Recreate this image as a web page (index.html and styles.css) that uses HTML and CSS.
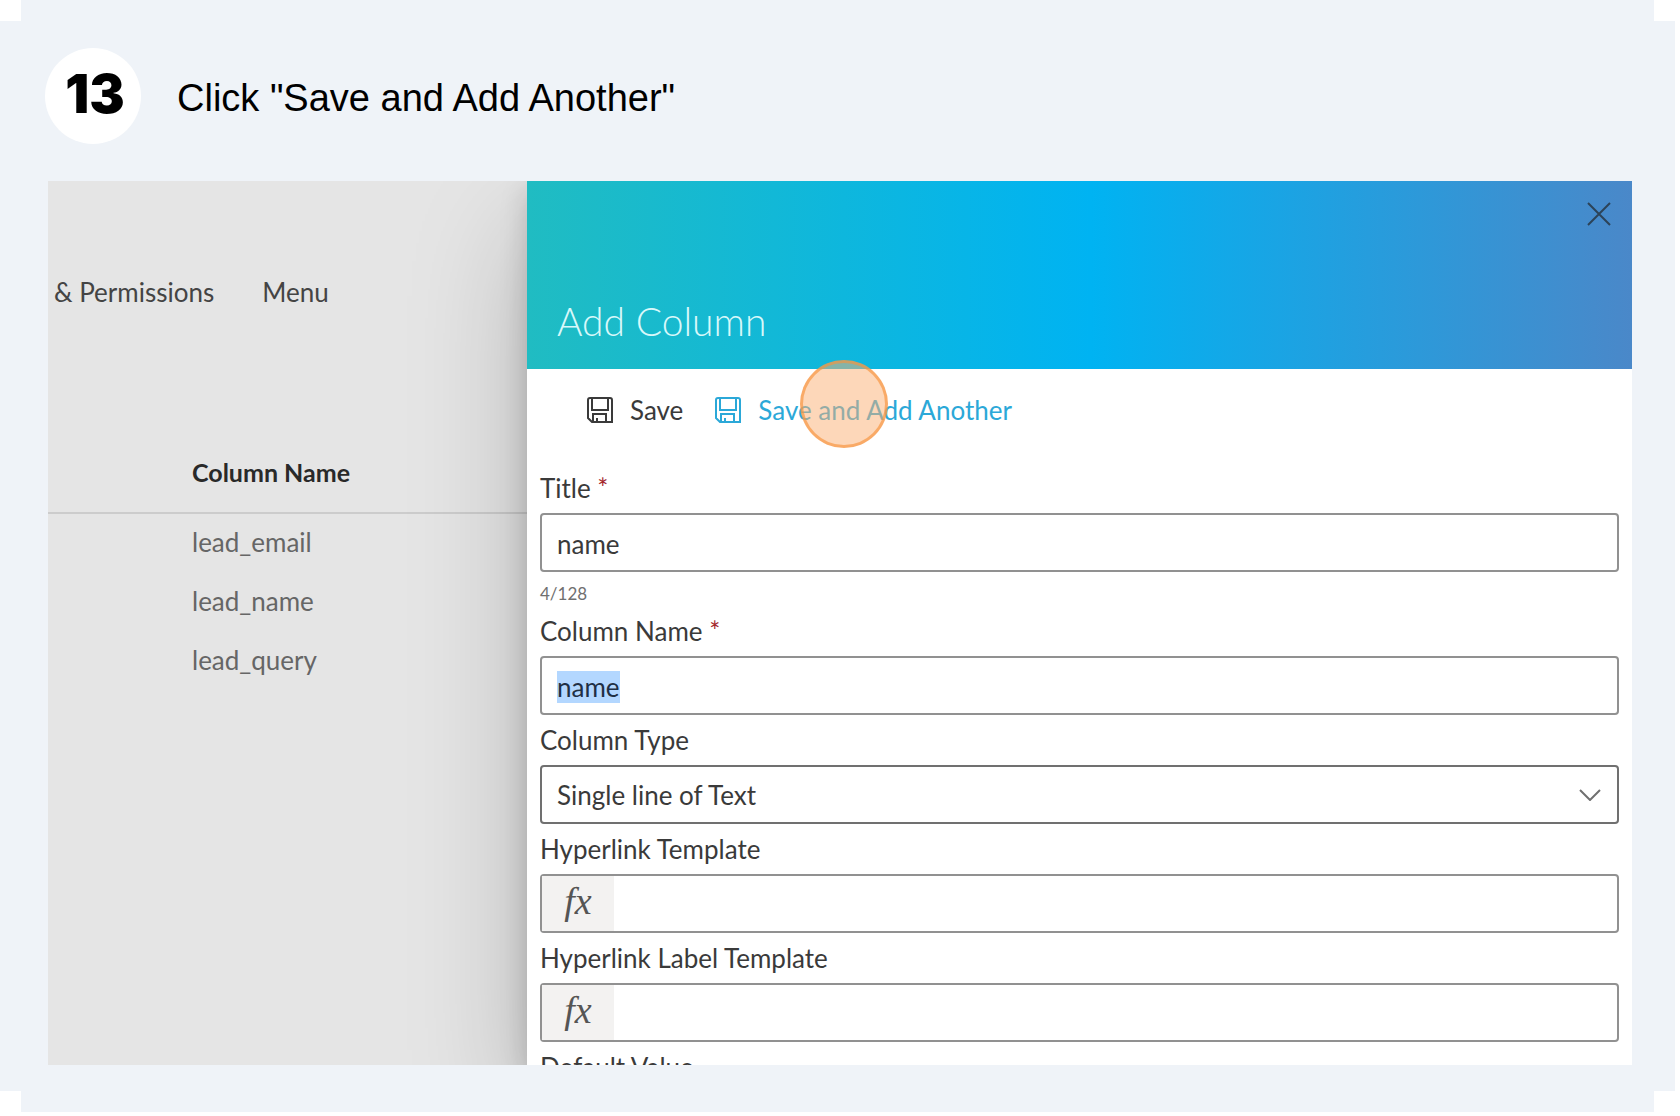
FILE: index.html
```html
<!DOCTYPE html>
<html lang="en">
<head>
<meta charset="utf-8">
<meta name="viewport" content="width=device-width, initial-scale=1">
<title>Step 13</title>
<link rel="stylesheet" href="styles.css">
</head>
<body>
<main class="step">
  <header class="step-header">
    <span class="step-number">13</span>
    <h1 class="step-title">Click "Save and Add Another"</h1>
  </header>
  <section class="preview">
    <div class="backdrop">
      <nav class="tabs">
        <a href="#permissions">&amp; Permissions</a>
        <a href="#menu">Menu</a>
      </nav>
      <table class="columns">
        <thead><tr><th scope="col">Column Name</th></tr></thead>
        <tbody>
          <tr><td>lead_email</td></tr>
          <tr><td>lead_name</td></tr>
          <tr><td>lead_query</td></tr>
        </tbody>
      </table>
    </div>
    <div class="panel">
      <header class="panel-header">
        <button class="close" type="button" aria-label="Close">
          <svg width="24" height="24" viewBox="0 0 24 24" fill="none" stroke="currentColor" stroke-width="2"><path d="M1 1l22 22M23 1L1 23"/></svg>
        </button>
        <h2 class="panel-title">Add Column</h2>
      </header>
      <div class="toolbar">
        <button class="command" type="button">
          <svg width="26" height="26" viewBox="0 0 26 26" fill="none" stroke="currentColor" stroke-width="2"><path d="M1 3Q1 1 3 1H23Q25 1 25 3V25H5L1 21ZM5 1V13H21V1M6 25V17H19V25M10 25V21"/></svg>
          <span>Save</span>
        </button>
        <button class="command command-active" type="button">
          <svg width="26" height="26" viewBox="0 0 26 26" fill="none" stroke="currentColor" stroke-width="2"><path d="M1 3Q1 1 3 1H23Q25 1 25 3V25H5L1 21ZM5 1V13H21V1M6 25V17H19V25M10 25V21"/></svg>
          <span>Save and Add Another</span>
          <i class="click-marker"></i>
        </button>
      </div>
      <form class="form">
        <label class="label" for="title">Title <span class="required">*</span></label>
        <input class="field" id="title" type="text" value="name">
        <div class="counter">4/128</div>
        <label class="label" for="column-name">Column Name <span class="required">*</span></label>
        <input class="field" id="column-name" type="text" value="name">
        <label class="label" for="column-type">Column Type</label>
        <div class="select">
          <select class="field field-select" id="column-type"><option>Single line of Text</option></select>
          <svg class="chevron" width="22" height="12" viewBox="0 0 22 12" fill="none" stroke="currentColor" stroke-width="2"><path d="M1 1l10 10L21 1"/></svg>
        </div>
        <label class="label" for="link-template">Hyperlink Template</label>
        <div class="field formula">
          <span class="fx">fx</span>
          <input class="formula-input" id="link-template" type="text">
        </div>
        <label class="label" for="label-template">Hyperlink Label Template</label>
        <div class="field formula">
          <span class="fx">fx</span>
          <input class="formula-input" id="label-template" type="text">
        </div>
        <div class="label">Default Value</div>
      </form>
    </div>
  </section>
</main>
<script src="script.js"></script>
</body>
</html>
```
FILE: styles.css
```css
* {
  box-sizing: border-box;
}

body {
  margin: 0;
  background: #fff;
  font-family: Lato, "Liberation Sans", sans-serif;
  font-size: 26px;
  line-height: 32px;
  color: #3a3a3a;
}

button,
input,
select {
  font: inherit;
  color: inherit;
}

/* Two overlapping bands leave the four corners notched. */
.step {
  margin: 0 5px 4px 0;
  padding: 48px 43px 47px 48px;
  background:
    linear-gradient(#eff3f8, #eff3f8) center / calc(100% - 42px) 100% no-repeat,
    linear-gradient(#eff3f8, #eff3f8) center / 100% calc(100% - 42px) no-repeat;
}

.step-header {
  display: flex;
  align-items: center;
  gap: 36px;
  margin: 0 0 37px -3px;
}

.step-number {
  display: flex;
  align-items: center;
  justify-content: center;
  width: 96px;
  height: 96px;
  padding: 0 0 4px 4px;
  border-radius: 50%;
  background: #fff;
  color: #000;
  font: 900 53px/60px Inter, sans-serif;
}

.step-title {
  margin: 0;
  padding-top: 4px;
  color: #000;
  font: 400 38px/48px "Liberation Sans", Arial, sans-serif;
}

.preview {
  display: grid;
  grid-template-columns: 479px minmax(0, 1fr);
  aspect-ratio: 1584 / 884;
  min-height: 0;
  overflow: hidden;
  background: #e5e5e5;
}

.backdrop,
.panel {
  min-height: 0;
}

.tabs {
  display: flex;
  gap: 48px;
  padding: 95px 6px 0;
}

.tabs a {
  color: #444;
  text-decoration: none;
}

.columns {
  width: 100%;
  margin-top: 121px;
  border-collapse: collapse;
  text-align: left;
}

.columns th {
  height: 84px;
  padding: 2px 0 0 144px;
  border-bottom: 2px solid #ccc;
  color: #292929;
  font-size: 25px;
  font-weight: 700;
}

.columns td {
  height: 59px;
  padding: 0 0 2px 144px;
  color: #666;
}

.panel {
  z-index: 1;
  background: #fff;
  box-shadow: 0 50px 110px rgba(0, 0, 0, .22), 0 10px 26px rgba(0, 0, 0, .18);
}

.panel-header {
  display: flex;
  flex-direction: column;
  justify-content: space-between;
  height: 188px;
  padding: 21px 21px 24px 30px;
  background: linear-gradient(90deg, #20bcc2, #00b3f2 51%, #4a88c9);
}

.close {
  align-self: flex-end;
  display: flex;
  padding: 0;
  border: 0;
  background: none;
  color: #2c4358;
}

.panel-title {
  margin: 0;
  color: #d8f8fa;
  font-size: 39px;
  font-weight: 300;
  line-height: 48px;
}

.toolbar {
  display: flex;
  gap: 32px;
  padding: 25px 60px 0;
}

.command {
  position: relative;
  display: flex;
  align-items: center;
  gap: 17px;
  padding: 0;
  border: 0;
  background: none;
}

.command-active {
  color: #2ba8d8;
}

.click-marker {
  position: absolute;
  top: -34px;
  left: 85px;
  width: 88px;
  height: 88px;
  border: 3px solid rgba(247, 148, 60, .65);
  border-radius: 50%;
  background: rgba(251, 176, 116, .5);
}

.form {
  padding: 37px 13px 0;
}

.label {
  display: block;
  height: 50px;
  padding-top: 9px;
}

.required {
  color: #a4262c;
}

.field {
  display: block;
  width: 100%;
  height: 59px;
  padding: 2px 15px 0;
  border: 2px solid #919191;
  border-radius: 4px;
  outline: 0;
  background: #fff;
  line-height: 34px;
}

.field::selection {
  background: #b3d7ff;
  color: #1f2f44;
}

.counter {
  height: 34px;
  padding-top: 6px;
  color: #707070;
  font-size: 17px;
}

.select {
  position: relative;
}

.field-select {
  padding-top: 0;
  appearance: none;
  border-color: #707070;
}

.chevron {
  position: absolute;
  top: 24px;
  right: 18px;
  color: #707070;
  pointer-events: none;
}

.formula {
  display: flex;
  padding: 0;
}

.fx {
  flex: none;
  width: 72px;
  background: #f3f2f1;
  color: #555;
  font: italic 38px/50px "Liberation Serif", serif;
  text-align: center;
}

.formula-input {
  flex: 1;
  min-width: 0;
  padding: 0 15px;
  border: 0;
  outline: 0;
  background: none;
}
```
FILE: script.js
```js
const columnName = document.getElementById("column-name");
columnName.focus({ preventScroll: true });
columnName.select();
```
